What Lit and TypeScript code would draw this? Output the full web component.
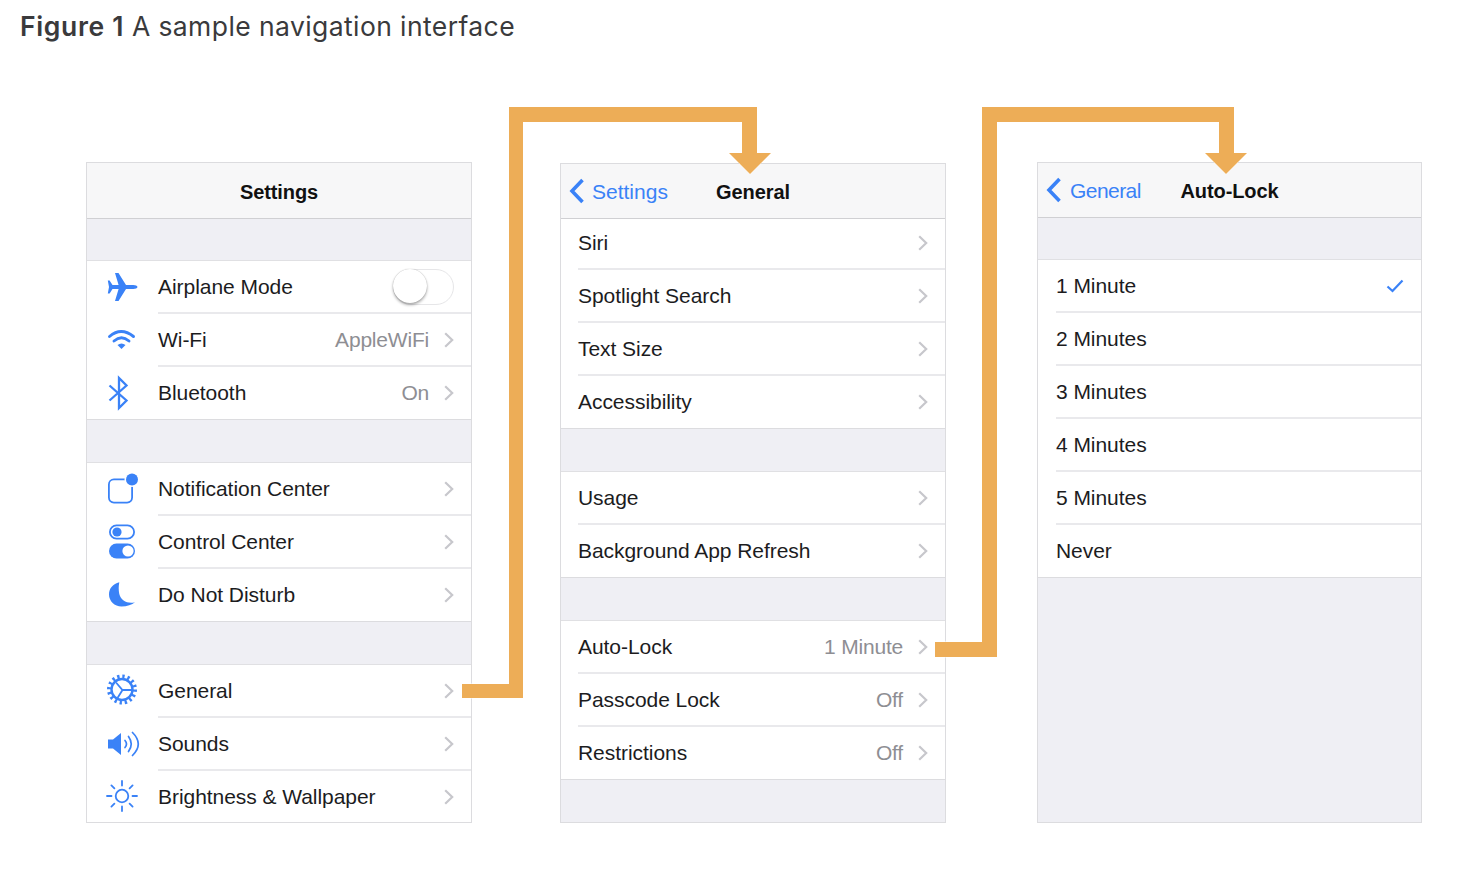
import { LitElement, html, css, svg, nothing, unsafeCSS } from 'lit';
import { customElement } from 'lit/decorators.js';

const BLUE = '#3a82f7';

const icons: Record<string, unknown> = {
  plane: svg`<path fill="${BLUE}" d="M33.5 18c0-1.3-2.2-2-4.2-2H22L14.5 4H11l3.6 12H8.5L5.6 11.5H3.8L5 18L3.8 24.5h1.8L8.5 20h6.1L11 32h3.5L22 20h7.3c2 0 4.2-.7 4.2-2z"/>`,
  wifi: svg`<g fill="none" stroke="${BLUE}" stroke-width="2.9" stroke-linecap="round"><path d="M5.5 14.5Q17 4.5 29.5 14.5"/><path d="M10 19Q17.5 12.5 25 19"/></g><path fill="${BLUE}" d="M13.5 23Q17.5 20 21.5 23L17.5 27Z"/>`,
  bluetooth: svg`<path fill="none" stroke="${BLUE}" stroke-width="2.3" d="M5.5 10.5L22.5 25.5L15 33V3L22.5 10.5L5.5 25.5"/>`,
  notification: svg`<rect x="4.9" y="8.4" width="23.2" height="23.2" rx="5" fill="none" stroke="${BLUE}" stroke-width="1.8"/><circle cx="28" cy="8.5" r="7.5" fill="#fff"/><circle cx="28" cy="8.5" r="6" fill="${BLUE}"/>`,
  control: svg`<rect x="5.9" y="1.4" width="24.2" height="13.2" rx="6.6" fill="none" stroke="${BLUE}" stroke-width="1.8"/><circle cx="13" cy="8" r="4.6" fill="${BLUE}"/><rect x="5" y="19.5" width="26" height="15" rx="7.5" fill="${BLUE}"/><circle cx="24" cy="27" r="5.6" fill="#fff"/>`,
  moon: svg`<path fill="${BLUE}" d="M15.3 5.2C9 6.5 5 11.5 5 17.5C5 24 10.5 29.5 17.5 29.5C23 29.5 28 27.5 31 25.2C24 27 17 24 15.3 17C14.5 13 14.5 9 15.3 5.2Z"/>`,
  gear: svg`<g fill="none" stroke="${BLUE}"><circle cx="18" cy="16.5" r="13" stroke-width="4" stroke-dasharray="2.3 2.8"/><circle cx="18" cy="16.5" r="10.5" stroke-width="2.4"/><path stroke-width="1.8" d="M12 9.5L18.5 17H28.5M18.5 17L13.5 25"/></g>`,
  speaker: svg`<path fill="${BLUE}" d="M4 13.5h5l8-6.5v22l-8-6.5H4z"/><g fill="none" stroke="${BLUE}" stroke-width="1.7" stroke-linecap="round"><path d="M21 14.5Q24 18 21 21.5"/><path d="M24.5 10.5Q30 18 24.5 25.5"/><path d="M28.5 6.5Q40 18 28.5 29.5"/></g>`,
  sun: svg`<g fill="none" stroke="${BLUE}" stroke-width="1.8" stroke-linecap="round"><circle cx="18" cy="17" r="6.3"/><path d="M18 2v4.5M18 27.5V32M3 17h4.5M28.5 17H33M7.4 6.4l3 3M25.6 24.6l3 3M7.4 27.6l3-3M25.6 9.4l3-3"/></g>`,
};

interface Row {
  label: string;
  icon?: string;
  value?: string;
  toggle?: boolean;
  check?: boolean;
  plain?: boolean;
}

interface Panel {
  cls: string;
  title: string;
  back?: string;
  groups: Row[][];
}

const panels: Panel[] = [
  {
    cls: 'p1',
    title: 'Settings',
    groups: [
      [
        { label: 'Airplane Mode', icon: 'plane', toggle: true },
        { label: 'Wi-Fi', icon: 'wifi', value: 'AppleWiFi' },
        { label: 'Bluetooth', icon: 'bluetooth', value: 'On' },
      ],
      [
        { label: 'Notification Center', icon: 'notification' },
        { label: 'Control Center', icon: 'control' },
        { label: 'Do Not Disturb', icon: 'moon' },
      ],
      [
        { label: 'General', icon: 'gear' },
        { label: 'Sounds', icon: 'speaker' },
        { label: 'Brightness & Wallpaper', icon: 'sun' },
      ],
    ],
  },
  {
    cls: 'p2',
    title: 'General',
    back: 'Settings',
    groups: [
      [{ label: 'Siri' }, { label: 'Spotlight Search' }, { label: 'Text Size' }, { label: 'Accessibility' }],
      [{ label: 'Usage' }, { label: 'Background App Refresh' }],
      [
        { label: 'Auto-Lock', value: '1 Minute' },
        { label: 'Passcode Lock', value: 'Off' },
        { label: 'Restrictions', value: 'Off' },
      ],
    ],
  },
  {
    cls: 'p3',
    title: 'Auto-Lock',
    back: 'General',
    groups: [
      [
        { label: '1 Minute', check: true, plain: true },
        { label: '2 Minutes', plain: true },
        { label: '3 Minutes', plain: true },
        { label: '4 Minutes', plain: true },
        { label: '5 Minutes', plain: true },
        { label: 'Never', plain: true },
      ],
    ],
  },
];

@customElement('app-root')
export class AppRoot extends LitElement {
  static styles = css`
    :host {
      display: block;
      position: relative;
      height: 872px;
      background: #fff;
      font-family: 'Liberation Sans', Arial, sans-serif;
      color: #1c1c1e;
      overflow: hidden;
    }
    .caption {
      margin: 0;
      padding: 9px 0 0 20px;
      height: 40px;
      box-sizing: border-box;
      font: 400 26.5px/34px 'Inter', sans-serif;
      letter-spacing: 0.41px;
      color: #3a3a3c;
    }
    .caption b {
      font-weight: 600;
      letter-spacing: 0.65px;
    }
    .panels {
      display: flex;
      align-items: flex-start;
      padding: 122px 0 0 86px;
    }
    .panel {
      width: 386px;
      height: 661px;
      box-sizing: border-box;
      border: 1px solid #dcdcdf;
      background: #efeff4;
      display: flex;
      flex-direction: column;
    }
    .panel.p2 {
      margin: 1px 0 0 88px;
      height: 660px;
    }
    .panel.p3 {
      margin-left: 91px;
      width: 385px;
    }
    .header {
      height: 55px;
      flex: none;
      box-sizing: border-box;
      background: #f7f7f8;
      border-bottom: 1px solid #d0d0d3;
      display: grid;
      grid-template-columns: 1fr auto 1fr;
      align-items: center;
      font-size: 21px;
    }
    .p1 .header {
      height: 56px;
    }
    .title {
      font-weight: 700;
      font-size: 20px;
      letter-spacing: -0.1px;
      color: #111;
      padding-top: 2px;
    }
    .p1 .title {
      padding-top: 3px;
    }
    .back {
      display: flex;
      align-items: center;
      gap: 7px;
      padding-left: 8px;
      padding-top: 2px;
      color: ${unsafeCSS(BLUE)};
    }
    .p3 .back {
      gap: 8px;
      letter-spacing: -0.55px;
    }
    .back svg {
      display: block;
      margin-top: -2px;
    }
    .group {
      margin-top: 43px;
      background: #fff;
      box-shadow: inset 0 1px 0 #e0e0e3;
      flex: none;
    }
    .group:first-of-type {
      margin-top: 41px;
    }
    .p2 .group:first-of-type {
      margin-top: 0;
      box-shadow: none;
    }
    .row {
      height: 53px;
      box-sizing: border-box;
      display: flex;
      align-items: center;
      padding-right: 17px;
      font-size: 21px;
      letter-spacing: -0.05px;
      position: relative;
    }
    .row::after {
      content: '';
      position: absolute;
      right: 0;
      bottom: -1px;
      left: 17px;
      height: 2px;
      background: #e9e9ec;
    }
    .p3 .row::after {
      left: 18px;
    }
    .row.with-icon::after {
      left: 71px;
    }
    .group .row:last-child::after {
      left: 0;
      height: 1px;
      background: #dcdcdf;
    }
    .p1 .group:last-child .row:last-child::after {
      bottom: 0;
    }
    .p2 .group:first-of-type .row:first-child {
      height: 50px;
      padding-bottom: 3px;
    }
    .icon {
      width: 36px;
      height: 36px;
      flex: none;
      margin: 0 17px 0 17px;
      display: block;
    }
    .label {
      flex: 1;
      padding-left: 17px;
    }
    .p3 .label {
      padding-left: 18px;
    }
    .with-icon .label {
      padding-left: 1px;
    }
    .value {
      color: #8e8e93;
      margin-right: 15px;
      letter-spacing: -0.2px;
    }
    .chevron {
      display: block;
      flex: none;
    }
    .toggle {
      width: 60.5px;
      height: 36px;
      box-sizing: border-box;
      border: 1.5px solid #e6e6e8;
      border-radius: 18px;
      margin-right: 0.5px;
      position: relative;
    }
    .knob {
      position: absolute;
      left: -1px;
      top: -1px;
      width: 34px;
      height: 34px;
      border-radius: 50%;
      background: #fff;
      box-shadow: 0 2px 3px rgba(0, 0, 0, 0.32), 0 0 1px rgba(0, 0, 0, 0.3);
    }
    .check {
      display: block;
      flex: none;
    }
    .arrows {
      position: absolute;
      left: 0;
      top: 0;
      pointer-events: none;
    }
  `;

  private renderRow(row: Row) {
    return html`
      <div class="row ${row.icon ? 'with-icon' : ''}">
        ${row.icon
          ? html`<svg class="icon" viewBox="0 0 36 36">${icons[row.icon]}</svg>`
          : nothing}
        <span class="label">${row.label}</span>
        ${row.value ? html`<span class="value">${row.value}</span>` : nothing}
        ${row.toggle
          ? html`<span class="toggle"><span class="knob"></span></span>`
          : row.check
            ? html`<svg class="check" width="18" height="14" viewBox="0 0 18 14">
                <path d="M1.5 7.5L6.5 12L16.5 1.5" fill="none" stroke="${BLUE}" stroke-width="2.2" />
              </svg>`
            : row.plain
              ? nothing
              : html`<svg class="chevron" width="10" height="16" viewBox="0 0 10 16">
                  <path d="M1.2 1.2L8.2 8L1.2 14.8" fill="none" stroke="#c7c7cc" stroke-width="2.2" />
                </svg>`}
      </div>
    `;
  }

  private renderPanel(panel: Panel) {
    return html`
      <section class="panel ${panel.cls}">
        <header class="header">
          <div class="back">
            ${panel.back
              ? html`<svg width="16" height="26" viewBox="0 0 16 26">
                    <path d="M13.5 2L3 13L13.5 24" fill="none" stroke="${BLUE}" stroke-width="3.6" />
                  </svg>
                  <span>${panel.back}</span>`
              : nothing}
          </div>
          <div class="title">${panel.title}</div>
          <div></div>
        </header>
        ${panel.groups.map(group => html`<div class="group">${group.map(r => this.renderRow(r))}</div>`)}
      </section>
    `;
  }

  render() {
    return html`
      <h1 class="caption"><b>Figure 1</b> A sample navigation interface</h1>
      <div class="panels">${panels.map(p => this.renderPanel(p))}</div>
      <svg class="arrows" width="1468" height="872" viewBox="0 0 1468 872">
        <g fill="#edad57" stroke="#fff" stroke-width="1" paint-order="stroke">
          <path d="M462 684H509V107H757V153H771L750 174L729 153H742V122H523V698H462Z" />
          <path d="M935 642H982V107H1234V153H1247L1226 174L1205 153H1219V122H997V657H935Z" />
        </g>
      </svg>
    `;
  }
}
